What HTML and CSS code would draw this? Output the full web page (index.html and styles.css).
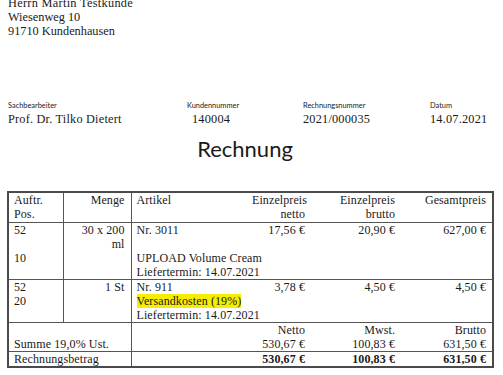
FILE: index.html
```html
<!DOCTYPE html>
<html lang="de">
<head>
<meta charset="utf-8">
<title>Rechnung</title>
<link rel="stylesheet" href="styles.css">
</head>
<body>
<div class="page">
  <div class="address">
    <div class="address-first">Herrn Martin Testkunde</div>
    <div>Wiesenweg 10</div>
    <div>91710 Kundenhausen</div>
  </div>

  <div class="info">
    <div class="info-item">
      <div class="label">Sachbearbeiter</div>
      <div class="value">Prof. Dr. Tilko Dietert</div>
    </div>
    <div class="info-item">
      <div class="label">Kundennummer</div>
      <div class="value value-indent">140004</div>
    </div>
    <div class="info-item">
      <div class="label">Rechnungsnummer</div>
      <div class="value">2021/000035</div>
    </div>
    <div class="info-item">
      <div class="label">Datum</div>
      <div class="value">14.07.2021</div>
    </div>
  </div>

  <h1 class="title">Rechnung</h1>

  <table class="invoice">
    <colgroup>
      <col class="c-pos">
      <col class="c-qty">
      <col class="c-art">
      <col class="c-net">
      <col class="c-gross">
      <col class="c-total">
    </colgroup>
    <thead>
      <tr>
        <th class="sep">Auftr.<br>Pos.</th>
        <th class="sep num">Menge</th>
        <th>Artikel</th>
        <th class="num">Einzelpreis<br>netto</th>
        <th class="num">Einzelpreis<br>brutto</th>
        <th class="num">Gesamtpreis</th>
      </tr>
    </thead>
    <tbody class="item">
      <tr>
        <td class="sep">52</td>
        <td class="sep num">30 x 200<br>ml</td>
        <td>Nr. 3011</td>
        <td class="num">17,56 €</td>
        <td class="num">20,90 €</td>
        <td class="num">627,00 €</td>
      </tr>
      <tr>
        <td class="sep">10</td>
        <td class="sep"></td>
        <td colspan="4">UPLOAD Volume Cream</td>
      </tr>
      <tr>
        <td class="sep"></td>
        <td class="sep"></td>
        <td colspan="4">Liefertermin: 14.07.2021</td>
      </tr>
    </tbody>
    <tbody class="item">
      <tr>
        <td class="sep">52</td>
        <td class="sep num">1 St</td>
        <td>Nr. 911</td>
        <td class="num">3,78 €</td>
        <td class="num">4,50 €</td>
        <td class="num">4,50 €</td>
      </tr>
      <tr>
        <td class="sep">20</td>
        <td class="sep"></td>
        <td colspan="4"><span class="mark">Versandkosten (19%)</span></td>
      </tr>
      <tr>
        <td class="sep"></td>
        <td class="sep"></td>
        <td colspan="4">Liefertermin: 14.07.2021</td>
      </tr>
    </tbody>
    <tbody class="sums">
      <tr>
        <td colspan="2" class="sep"><br>Summe 19,0% Ust.</td>
        <td></td>
        <td class="num">Netto<br>530,67 €</td>
        <td class="num">Mwst.<br>100,83 €</td>
        <td class="num">Brutto<br>631,50 €</td>
      </tr>
    </tbody>
    <tbody class="total">
      <tr>
        <td colspan="2" class="sep">Rechnungsbetrag</td>
        <td></td>
        <td class="num strong">530,67 €</td>
        <td class="num strong">100,83 €</td>
        <td class="num strong">631,50 €</td>
      </tr>
    </tbody>
  </table>
</div>
</body>
</html>
```

FILE: styles.css
```css
html, body {
  margin: 0;
  padding: 0;
  background: #ffffff;
}

body {
  font-family: "Liberation Serif", "Times New Roman", serif;
  font-size: 12px;
  line-height: 14px;
  color: #1a1a1a;
  overflow: hidden;
}

.page {
  width: 503px;
  height: 375px;
  overflow: hidden;
}

.address {
  margin-top: -4px;
  padding-left: 8px;
  font-size: 12.3px;
}

.address-first {
  letter-spacing: 0.3px;
}

.info {
  display: grid;
  grid-template-columns: 179px 116px 127px auto;
  padding-left: 8px;
  margin-top: 62px;
}

.label {
  font-family: Lato, "Open Sans", sans-serif;
  font-size: 7.4px;
  line-height: 12px;
  color: #222;
}

.value {
  font-size: 12.3px;
  line-height: 15px;
  letter-spacing: 0.2px;
}

.value-indent {
  padding-left: 5px;
}

.title {
  margin: 9px 0 0 0;
  width: 490px;
  text-align: center;
  font-family: Lato, "Open Sans", sans-serif;
  font-weight: 400;
  font-size: 22px;
  line-height: 26px;
  color: #1a1a1a;
}

.invoice {
  margin: 29px 0 0 7px;
  width: 485px;
  table-layout: fixed;
  border-collapse: collapse;
  border: 2px solid #4a4a4a;
}

.c-pos { width: 55px; }
.c-qty { width: 68px; }
.c-art { width: 116px; }
.c-net { width: 64px; }
.c-gross { width: 90px; }
.c-total { width: 92px; }

.invoice th,
.invoice td {
  padding: 0 5px;
  vertical-align: top;
  text-align: left;
  font-weight: normal;
  white-space: nowrap;
  overflow: visible;
  letter-spacing: 0.1px;
}

.invoice thead th {
  padding-bottom: 1px;
}

.invoice .num {
  text-align: right;
  padding-right: 6px;
}

.invoice .sep {
  border-right: 1px solid #555;
}

.invoice .item,
.invoice .sums,
.invoice .total {
  border-top: 1px solid #555;
}

.invoice .strong {
  font-weight: bold;
}

.mark {
  background: #f6ee00;
}
```
